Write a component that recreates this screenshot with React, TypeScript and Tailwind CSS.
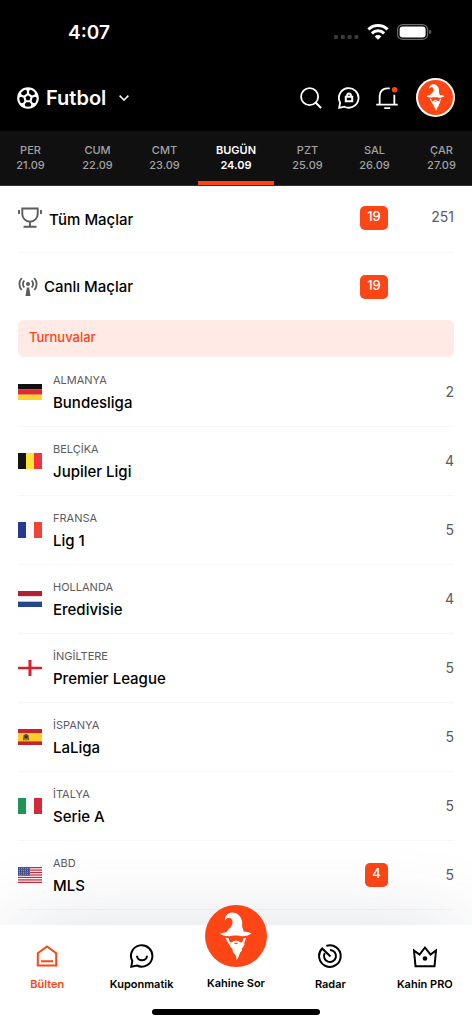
import { ReactNode } from "react";
import { RiFootballLine } from "react-icons/ri";

const days = [
  { name: "PER", date: "21.09" },
  { name: "CUM", date: "22.09" },
  { name: "CMT", date: "23.09" },
  { name: "BUGÜN", date: "24.09", active: true },
  { name: "PZT", date: "25.09" },
  { name: "SAL", date: "26.09" },
  { name: "ÇAR", date: "27.09" },
];

const leagues = [
  { country: "ALMANYA", name: "Bundesliga", count: 2, flag: "de" },
  { country: "BELÇİKA", name: "Jupiler Ligi", count: 4, flag: "be" },
  { country: "FRANSA", name: "Lig 1", count: 5, flag: "fr" },
  { country: "HOLLANDA", name: "Eredivisie", count: 4, flag: "nl" },
  { country: "İNGİLTERE", name: "Premier League", count: 5, flag: "en" },
  { country: "İSPANYA", name: "LaLiga", count: 5, flag: "es" },
  { country: "İTALYA", name: "Serie A", count: 5, flag: "it" },
  { country: "ABD", name: "MLS", count: 5, flag: "us", live: 4 },
];

function Stripes({ colors, vertical }: { colors: string[]; vertical?: boolean }) {
  return (
    <>
      {colors.map((c, i) =>
        vertical ? (
          <rect key={i} x={i * 8} width="8" height="16" fill={c} />
        ) : (
          <rect key={i} y={(i * 16) / 3} width="24" height="5.4" fill={c} />
        )
      )}
    </>
  );
}

const flags: Record<string, ReactNode> = {
  de: <Stripes colors={["#111111", "#dc2b31", "#ffd22e"]} />,
  be: <Stripes vertical colors={["#151515", "#ffe436", "#ef3340"]} />,
  fr: <Stripes vertical colors={["#283991", "#f9f9f9", "#f24336"]} />,
  nl: <Stripes colors={["#ae2231", "#f9f9f9", "#21468b"]} />,
  it: <Stripes vertical colors={["#1f9455", "#f9f9f9", "#d12a38"]} />,
  en: (
    <>
      <rect width="24" height="16" fill="#fdfdfd" />
      <path d="M10.500 0h3v16h-3zM0 6.700h24v2.600H0z" fill="#d6202f" />
    </>
  ),
  es: (
    <>
      <rect width="24" height="16" fill="#c8232b" />
      <rect y="4" width="24" height="8.400" fill="#ffcb2e" />
      <path d="M5.500 6.200 8 4.800l2.500 1.400.6 5H9.600l-.4-2H8.600v2.200H7.400V9.200h-.6l-.4 2H5z" fill="#6b4a1c" />
      <path d="M7 7h2v2H7z" fill="#33240f" />
    </>
  ),
  us: (
    <>
      <rect width="24" height="16" fill="#ffffff" />
      {[0, 1, 2, 3, 4, 5, 6].map((i) => (
        <rect key={i} y={i * 2.46} width="24" height="1.24" fill="#cc2738" />
      ))}
      <rect width="12" height="8.600" fill="#45528a" />
      {[1.3, 3.3, 5.3, 7.3].map((y) => (
        <path key={y} d={`M1 ${y}h10.500`} stroke="#c9cde0" strokeWidth=".6" strokeDasharray="1 1" />
      ))}
    </>
  ),
};

function Wizard({ className }: { className: string }) {
  return (
    <svg viewBox="0 0 62 62" className={className} aria-hidden="true">
      <circle cx="31" cy="31" r="31" fill="#fd4515" />
      <g fill="#fff">
        <path d="M20 15.500C19.300 11.500 22.500 7.600 27 7.600C32 7.600 35.800 11 37 16C37.600 18.500 36.800 20 37.300 22C37.700 23.800 38.600 25 38.600 26.600C41.500 26.800 45 27.400 46.600 28.600C44.500 30.200 41.500 31.300 37 31.300C34 30.200 27 30.200 24 31.200C20 31 16.800 30.200 15 28.800C16.500 28 18.500 27.600 21.300 27.200C22 25.200 25 23.800 26.600 20.800C28.300 17.600 27.800 14 25 13C22.800 12.300 21.500 13.500 20 15.500Z" />
        <path d="M20.600 32.600L23.800 33.600C24 36 24.800 37.600 26 37.600C27.400 37.500 28 36 31 35.600C34 36 34.600 37.500 36 37.600C37.200 37.600 38 36 38.200 33.600L41.200 32.600C40.800 34.800 39.800 36.800 39 38.300L39.600 38.800C39 41 38 42.500 36.800 43.600L37 45.500C35.600 46.600 34.800 48 34.300 49.500C33.700 51.800 32.600 53.800 31.500 55C31.400 52.500 31 50.800 29.800 49.300C28.600 48 27.800 47 27.600 45.200L27.300 43.800C25.800 42.500 24.500 40.800 24 39L23.600 38.600C22.300 37 21.200 34.800 20.600 32.600Z" />
      </g>
      <path d="M28.700 38Q31 37 33.300 38Q32.500 39 31 39T28.700 38z" fill="#fd4515" />
    </svg>
  );
}

function Icon({ children, className }: { children: ReactNode; className: string }) {
  return (
    <svg viewBox="0 0 24 24" fill="none" stroke="currentColor" strokeWidth="2" className={className} aria-hidden="true">
      {children}
    </svg>
  );
}

const chatBubble = "M1.300 22.700 2.300 17A10.700 10.700 0 1 1 7 21.500z";

function StatusBar() {
  return (
    <div className="flex h-16 items-center justify-between pr-10 pl-[68px]">
      <span className="pt-0.5 text-[19px] font-semibold">4:07</span>
      <div className="flex items-center gap-2">
        <svg viewBox="0 0 25 6" className="mt-2.5 h-1.5 w-[25px]" fill="#3a3a3a">
          <rect x="0" y="1" width="4" height="4" rx="1.300" />
          <rect x="6.800" y="1" width="4" height="4" rx="1.300" />
          <rect x="13.600" y="1" width="4" height="4" rx="1.300" />
          <rect x="20.400" y="1" width="4" height="4" rx="1.300" />
        </svg>
        <svg viewBox="0 0 22 16" className="h-4 w-[22px]" fill="none" stroke="#fff" strokeWidth="3">
          <path d="M1.400 5.400a13.800 13.800 0 0 1 19.200 0" />
          <path d="M4.900 9.300a8.800 8.800 0 0 1 12.200 0" />
          <path d="M11 15.800 7.700 12.400a4.700 4.700 0 0 1 6.600 0z" fill="#fff" stroke="none" />
        </svg>
        <svg viewBox="0 0 35 16" className="h-4 w-[35px]">
          <rect x=".6" y=".6" width="30" height="14.800" rx="5" fill="none" stroke="#6b6b6b" strokeWidth="1.200" />
          <rect x="2.600" y="2.600" width="26" height="10.800" rx="3.200" fill="#fff" />
          <path d="M32.300 5.500q2 .8 2 2.500t-2 2.500z" fill="#6b6b6b" />
        </svg>
      </div>
    </div>
  );
}

function Header() {
  return (
    <header className="bg-black text-white">
      <StatusBar />
      <div className="flex h-[67px] items-center justify-between pr-[17px] pl-[15px]">
        <button className="flex items-center gap-[5px]">
          <RiFootballLine className="size-[26px]" />
          <span className="text-[20px] font-semibold">Futbol</span>
          <svg viewBox="0 0 10 6" className="ml-2 h-1.5 w-2.5" fill="none" stroke="#fff" strokeWidth="1.500">
            <path d="M.6.6 5 5 9.400.6" />
          </svg>
        </button>
        <div className="flex items-center">
          <button aria-label="Ara" className="mr-4">
            <Icon className="size-[22px]">
              <circle cx="10.500" cy="10.500" r="9.300" />
              <path d="m17 17 6 6" strokeWidth="2.300" />
            </Icon>
          </button>
          <button aria-label="Gizli sohbet" className="mr-4">
            <Icon className="size-[22px]">
              <path d={chatBubble} />
              <path d="M8.500 10.700h7v4.800h-7zM10 10.700V9a2 2 0 0 1 4 0v1.700" strokeWidth="2.200" />
            </Icon>
          </button>
          <button aria-label="Bildirimler" className="mr-[18px]">
            <Icon className="h-6 w-[22px]">
              <path d="M15 1.500h-3a8 8 0 0 0-8 8V19M20 8.500V19M.3 19.200h23.400M9 23h6.500" />
              <circle cx="20.300" cy="3" r="3" fill="#fd4515" stroke="none" />
            </Icon>
          </button>
          <button aria-label="Profil" className="rounded-full bg-white p-0.5">
            <Wizard className="size-[35px]" />
          </button>
        </div>
      </div>
    </header>
  );
}

function DayTabs() {
  return (
    <div className="overflow-hidden border-b border-[#333] bg-[#101010]">
      <nav className="-mx-[3px] flex h-[54px]">
        {days.map((d) => (
          <button
            key={d.name}
            className={`flex flex-col items-center border-b-4 pt-3 text-[11px] leading-[15px] ${
              d.active
                ? "w-[76px] border-[#fd4515] font-semibold text-white"
                : "flex-1 border-transparent font-medium text-[#a3a3a3]"
            }`}
          >
            <span>{d.name}</span>
            <span>{d.date}</span>
          </button>
        ))}
      </nav>
    </div>
  );
}

function Badge({ children, className }: { children: ReactNode; className: string }) {
  return (
    <span className={`flex h-6 items-center justify-center rounded-[5px] bg-[#fd4515] pb-0.5 text-[13px] font-medium text-white ${className}`}>
      {children}
    </span>
  );
}

function NavItem({ label, children, active }: { label: string; children: ReactNode; active?: boolean }) {
  return (
    <a
      href="#"
      className={`flex flex-1 flex-col items-center pt-[19px] text-[11px] leading-4 font-semibold whitespace-nowrap ${
        active ? "text-[#fd4515]" : "text-black"
      }`}
    >
      <span className="mb-2 flex h-6 items-center">{children}</span>
      {label}
    </a>
  );
}

function BottomNav() {
  return (
    <div className="sticky bottom-0 z-10 bg-white shadow-[0_0_90px_-10px_rgba(60,70,100,0.2)]">
      <nav className="flex h-[84px]">
        <NavItem label="Bülten" active>
          <Icon className="size-6">
            <path d="M2.800 9.200 12 2.500l9.200 6.700v12.300H2.800zM6 17.200h12" />
          </Icon>
        </NavItem>
        <NavItem label="Kuponmatik">
          <Icon className="size-6">
            <path d={chatBubble} />
            <path d="M7 11.700a5 4.500 0 0 0 10 0" />
          </Icon>
        </NavItem>
        <a href="#" className="-mt-5 flex flex-1 flex-col items-center gap-2 text-[11px] leading-4 font-semibold whitespace-nowrap text-black">
          <Wizard className="size-[62px]" />
          Kahine Sor
        </a>
        <NavItem label="Radar">
          <Icon className="size-6">
            <path d="M8.300 1.900A10.800 10.800 0 1 1 4.200 4.500L12.500 12.500" />
            <path d="M12 6a6 6 0 1 1-5.200 3" />
          </Icon>
        </NavItem>
        <NavItem label="Kahin PRO">
          <Icon className="size-6">
            <path d="M1 6.500 6.500 10.500 12 3.500l5.500 7 5.500-4-1.500 15.800h-19z" />
            <circle cx="12" cy="14.500" r="2.300" fill="currentColor" stroke="none" />
          </Icon>
        </NavItem>
      </nav>
      <div className="mx-auto mb-[9px] h-1.5 w-[168px] rounded-full bg-black" />
    </div>
  );
}

export default function App() {
  return (
    <div className="flex min-h-screen flex-col bg-white font-['Inter',sans-serif] text-black">
      <Header />
      <DayTabs />
      <main className="flex-1 px-[18px]">
        <a href="#" className="flex h-[67px] items-center border-b border-[#f6f6f6]">
          <svg viewBox="0 0 24 21" className="mr-[7px] mb-1 h-[21px] w-6" fill="none" stroke="#5b5b60" strokeWidth="1.900" aria-hidden="true">
            <path d="M4.300 1.500h15.400v5.500a7.700 7.700 0 0 1-15.400 0zM12 15v4.500M5.500 19.700h13M1 3v4M23 3v4" />
          </svg>
          <span className="flex-1 pt-0.5 text-[15px] font-medium">Tüm Maçlar</span>
          <Badge className="mr-9 mb-0.5 w-7">19</Badge>
          <span className="mb-1 w-[30px] text-right text-sm text-[#5b5b60]">251</span>
        </a>
        <a href="#" className="flex h-[67px] items-center">
          <svg viewBox="0 0 20 19" className="mr-1.5 h-[19px] w-5" fill="none" stroke="#5b5b60" strokeWidth="1.800" aria-hidden="true">
            <circle cx="10" cy="7" r="2" fill="#5b5b60" stroke="none" />
            <path d="M8.800 10.500h2.400l1.300 8.500h-5z" fill="#5b5b60" stroke="none" />
            <path d="M3.700 1a9 9 0 0 0 0 12M16.300 1a9 9 0 0 1 0 12M6.300 3.500a5.500 5.500 0 0 0 0 7M13.700 3.500a5.500 5.500 0 0 1 0 7" />
          </svg>
          <span className="flex-1 pt-0.5 text-[15px] font-medium">Canlı Maçlar</span>
          <Badge className="mr-[66px] w-7">19</Badge>
        </a>
        <h2 className="h-[37px] rounded-md bg-[#ffeae5] pt-[7px] pl-[11px] text-[13px] leading-5 font-medium text-[#fd4515]">Turnuvalar</h2>
        <ul className="pt-px">
          {leagues.map((l) => (
            <li key={l.country}>
              <a href="#" className="flex h-[69px] items-center border-b border-[#f6f6f6]">
                <svg viewBox="0 0 24 16" className="mr-[11px] h-4 w-6" aria-hidden="true">
                  {flags[l.flag]}
                </svg>
                <span className="flex flex-1 flex-col gap-[5px] pt-px">
                  <span className="text-[11px] leading-4 text-[#5b5b60]">{l.country}</span>
                  <span className="text-[15px] leading-5 font-medium">{l.name}</span>
                </span>
                {l.live && <Badge className="mr-9 w-[23px]">{l.live}</Badge>}
                <span className="w-[30px] text-right text-sm text-[#5b5b60]">{l.count}</span>
              </a>
            </li>
          ))}
        </ul>
      </main>
      <BottomNav />
    </div>
  );
}
